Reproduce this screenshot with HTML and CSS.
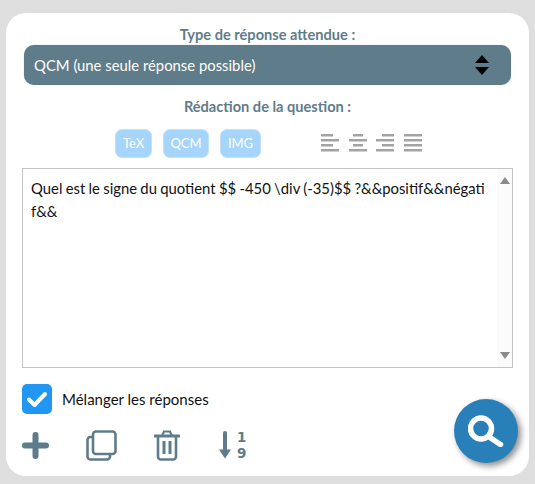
FILE: index.html
```html
<!DOCTYPE html>
<html lang="fr">
<head>
<meta charset="utf-8">
<title>Question</title>
<link rel="stylesheet" href="styles.css">
</head>
<body>
<main class="card">
  <h2 class="label">Type de réponse attendue :</h2>
  <div class="select">
    <span>QCM (une seule réponse possible)</span>
    <svg class="updown" width="14" height="20" viewBox="0 0 14 20"><path d="M7 0 14 8H0Z"/><path d="M0 12H14L7 20Z"/></svg>
  </div>
  <h2 class="label label-red">Rédaction de la question :</h2>
  <div class="toolbar">
    <div class="tags">
      <span class="tag tag-tex">TeX</span>
      <span class="tag tag-qcm">QCM</span>
      <span class="tag tag-img">IMG</span>
    </div>
    <div class="aligns">
      <svg width="18" height="18" viewBox="0 0 18 18"><path d="M0 0h12v2.6H0zM0 5h18v2.6H0zM0 10h12v2.6H0zM0 15h18v2.6H0z"/></svg>
      <svg width="18" height="18" viewBox="0 0 18 18"><path d="M4 0h10v2.6H4zM0 5h18v2.6H0zM4 10h10v2.6H4zM0 15h18v2.6H0z"/></svg>
      <svg width="18" height="18" viewBox="0 0 18 18"><path d="M6 0h12v2.6H6zM0 5h18v2.6H0zM6 10h12v2.6H6zM0 15h18v2.6H0z"/></svg>
      <svg width="18" height="18" viewBox="0 0 18 18"><path d="M0 0h18v2.6H0zM0 5h18v2.6H0zM0 10h18v2.6H0zM0 15h18v2.6H0z"/></svg>
    </div>
  </div>
  <div class="editor">
    <p class="editor-text">Quel est le signe du quotient $$ -450 \div (-35)$$ ?&amp;&amp;positif&amp;&amp;négati<br>f&amp;&amp;</p>
    <div class="scrollbar">
      <svg width="10" height="7" viewBox="0 0 12 8" preserveAspectRatio="none"><path d="M6 0 12 8H0Z"/></svg>
      <svg width="10" height="7" viewBox="0 0 12 8" preserveAspectRatio="none"><path d="M0 0H12L6 8Z"/></svg>
    </div>
  </div>
  <div class="check-row">
    <span class="checkbox">
      <svg width="22" height="18" viewBox="0 0 22 18"><path d="M3 9.5 8.5 15 19 4" fill="none" stroke="#fff" stroke-width="4" stroke-linecap="round" stroke-linejoin="round"/></svg>
    </span>
    <span class="check-text">Mélanger les réponses</span>
  </div>
  <div class="actions">
    <svg width="27" height="27" viewBox="0 0 27 27"><path d="M13.5 3v21M3 13.500h21" fill="none" stroke="#5f7c8a" stroke-width="6" stroke-linecap="round"/></svg>
    <svg width="31" height="31" viewBox="0 0 31 31" fill="none" stroke="#5f7c8a" stroke-width="2.600"><rect x="7" y="1.500" width="22.500" height="22.500" rx="3"/><path d="M7 7H4.500A3 3 0 0 0 1.500 10V26.500A3 3 0 0 0 4.500 29.500H21A3 3 0 0 0 24 26.500V24"/></svg>
    <svg width="26" height="31" viewBox="0 0 26 31" fill="none" stroke="#5f7c8a" stroke-width="2.600" stroke-linecap="round"><path d="M4 7V26.500A3 3 0 0 0 7 29.500H19A3 3 0 0 0 22 26.500V7"/><path d="M1 6H25" stroke-width="3"/><path d="M8.500 5 10 1.500H16L17.500 5" stroke-width="2.200"/><path d="M10 11V24M16 11V24" stroke-width="3" stroke-linecap="butt"/></svg>
    <div class="sort">
      <svg width="12" height="28" viewBox="0 0 12 28"><path d="M6 2V22" fill="none" stroke="#5f7c8a" stroke-width="4" stroke-linecap="round"/><path d="M0 18.500H12L6 27.500Z" fill="#5f7c8a"/></svg>
      <div class="sort-digits"><span>1</span><span>9</span></div>
    </div>
  </div>
  <button class="fab" type="button" aria-label="Rechercher">
    <svg width="36" height="32" viewBox="0 0 36 32" fill="none" stroke="#fff"><circle cx="13" cy="13.500" r="10.500" stroke-width="5.500"/><path d="M22 22.500 32.500 29.500" stroke-width="5.500" stroke-linecap="round"/></svg>
  </button>
</main>
</body>
</html>
```

FILE: styles.css
```css
* { box-sizing: border-box; }
html, body { margin: 0; height: 100%; }
body {
  background: #dedede;
  padding: 13px 6px 8px;
  font-family: "Lato", sans-serif;
  overflow: hidden;
}
.card {
  position: relative;
  height: 463px;
  background: #fff;
  border-radius: 20px;
  padding: 12px 16px 0;
  display: flex;
  flex-direction: column;
}
.label {
  margin: 0;
  color: #5f7c8a;
  font-size: 14.6px;
  font-weight: 700;
  line-height: 20px;
  text-align: center;
}
.select {
  margin: 0 2px;
  height: 40px;
  background: #5f7c8a;
  border-radius: 10px;
  color: #fff;
  font-size: 14.85px;
  display: flex;
  align-items: center;
  justify-content: space-between;
  padding: 0 22px 0 10px;
  box-shadow: 0 0 1px #8fa3ad;
}
.updown { fill: #000; }
.label-red { margin-top: 12px; }
.toolbar {
  margin-top: 11px;
  height: 30px;
  display: flex;
  align-items: center;
  padding-left: 93px;
}
.tags { display: flex; gap: 11px; }
.tag {
  height: 29px;
  background: #a5d5fb;
  border: 1px solid #c2e2fb;
  border-radius: 7px;
  color: #fff;
  font-size: 13px;
  display: flex;
  align-items: center;
  justify-content: center;
}
.tag-tex { width: 37px; }
.tag-qcm { width: 46px; }
.tag-img { width: 41px; }
.aligns {
  margin-left: 60px;
  display: flex;
  gap: 9.500px;
  fill: #a3a3a3;
}
.aligns svg { display: block; }
.editor {
  margin-top: 10px;
  height: 200px;
  border: 1px solid #c4c4c4;
  display: flex;
  justify-content: space-between;
  background: #fff;
}
.editor-text {
  margin: 0;
  padding: 8px 0 0 8px;
  font-size: 14.850px;
  word-spacing: -0.5px;
  line-height: 23px;
  color: #111;
}
.scrollbar {
  width: 15px;
  background: #fbfbfb;
  display: flex;
  flex-direction: column;
  justify-content: space-between;
  align-items: center;
  padding: 8px 0;
  fill: #8a8a8a;
}
.scrollbar svg { display: block; }
.check-row {
  margin-top: 16px;
  display: flex;
  align-items: center;
  gap: 10px;
}
.checkbox {
  width: 30px;
  height: 30px;
  background: #2196f3;
  border-radius: 5px;
  display: flex;
  align-items: center;
  justify-content: center;
}
.check-text { font-size: 15px; color: #111; }
.actions {
  margin-top: 15px;
  display: flex;
  align-items: center;
}
.actions > svg:nth-child(2) { margin-left: 37px; }
.actions > svg:nth-child(3) { margin-left: 37px; }
.sort { margin-left: 39px; display: flex; align-items: center; gap: 6px; }
.sort-digits {
  display: flex;
  flex-direction: column;
  color: #5f7c8a;
  font-family: "DejaVu Sans", sans-serif;
  font-size: 13.500px;
  font-weight: 700;
  line-height: 16px;
  text-align: center;
}
.fab {
  position: absolute;
  left: 448px;
  top: 386px;
  width: 64px;
  height: 64px;
  padding: 0;
  border: 0;
  border-radius: 50%;
  background: #2980b9;
  box-shadow: 3px 3px 6px rgba(0,0,0,.45);
  display: flex;
  align-items: center;
  justify-content: center;
}
```
